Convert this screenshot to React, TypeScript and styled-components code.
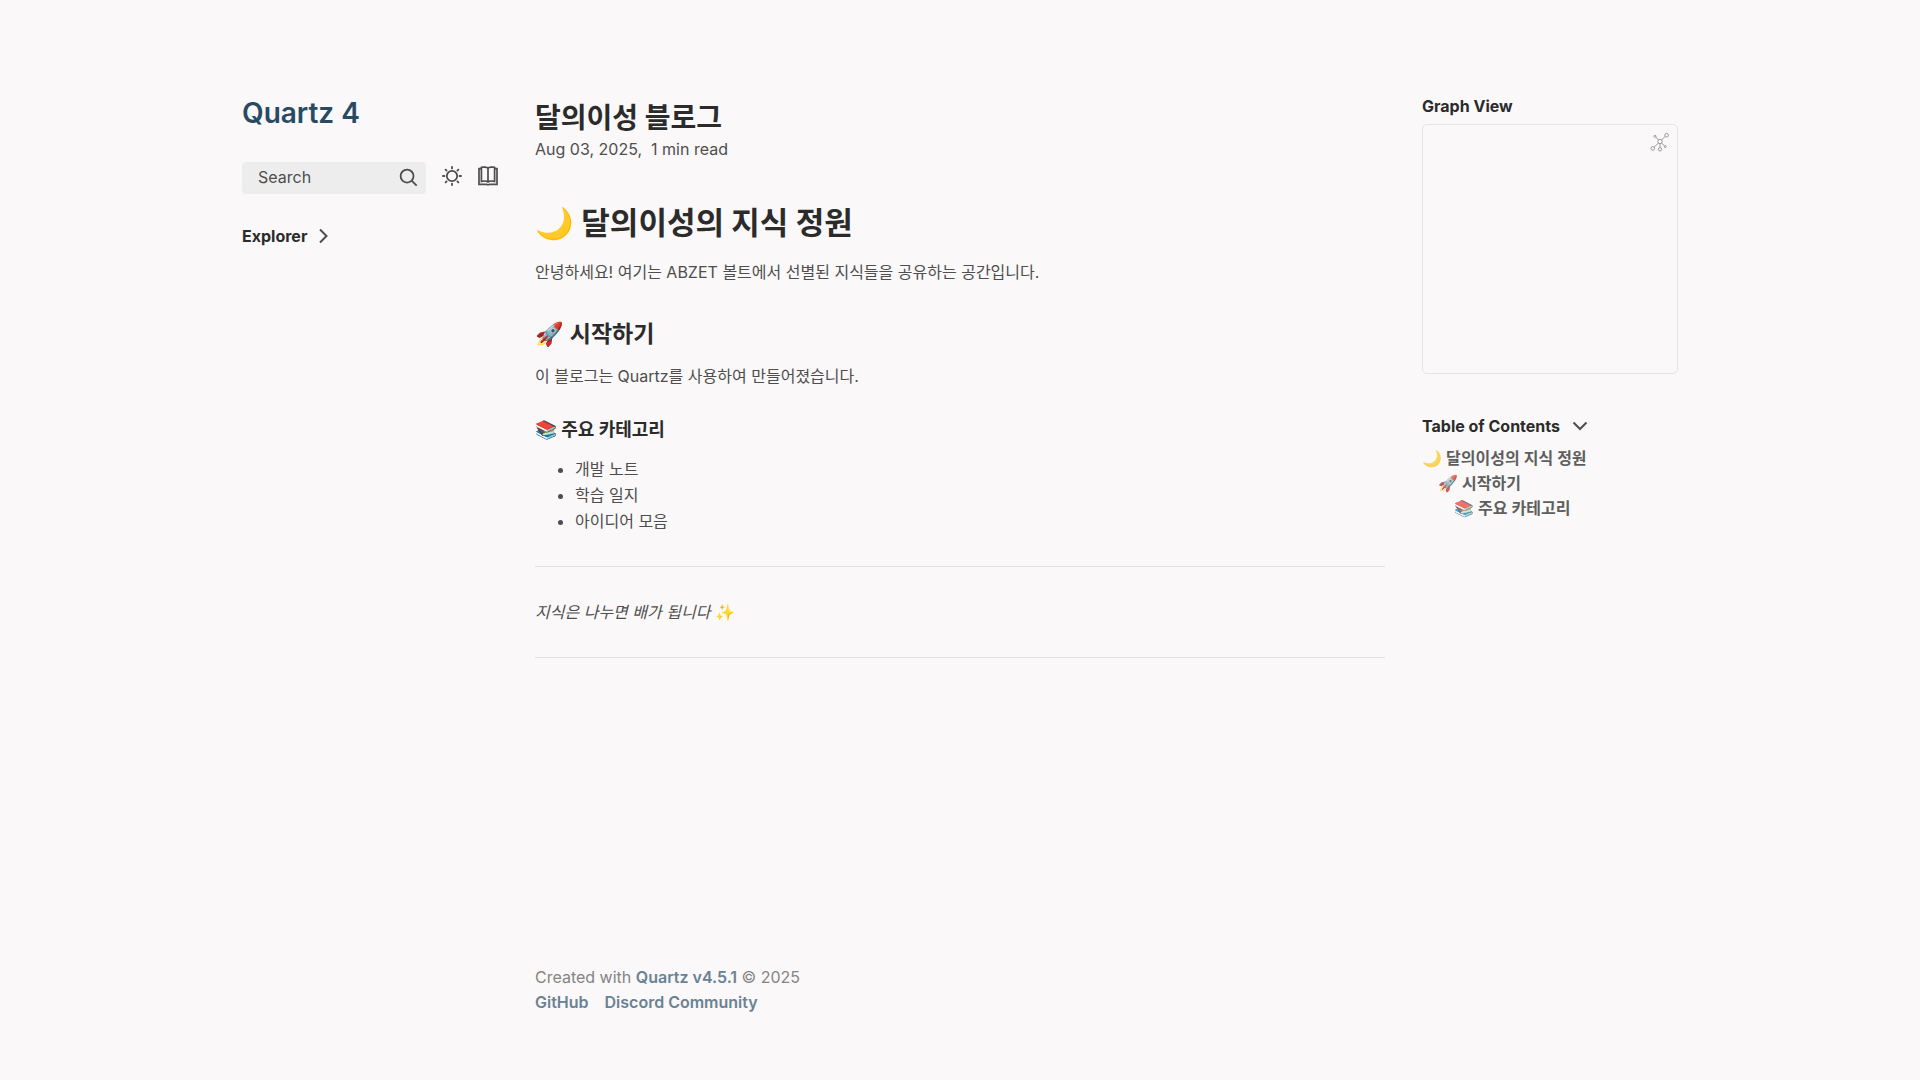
import React, { useState } from "react";
import styled, { createGlobalStyle } from "styled-components";

const GlobalStyle = createGlobalStyle`
  * { box-sizing: border-box; }
  html { text-size-adjust: none; }
  body {
    margin: 0;
    background: #faf8f8;
    color: #4e4e4e;
    font-family: Inter, "Noto Sans CJK KR", sans-serif;
    font-optical-sizing: none;
    font-size: 16px;
    line-height: 26px;
    text-rendering: optimizeLegibility;
    -webkit-font-smoothing: antialiased;
  }
`;

const Page = styled.div`
  max-width: 1500px;
  min-height: 100vh;
  margin: 0 auto;
  display: grid;
  grid-template-columns: 320px minmax(0, 1fr) 320px;
  column-gap: 5px;
`;

const Sidebar = styled.aside<{ $gap: number }>`
  padding: 96px 32px 32px;
  display: flex;
  flex-direction: column;
  gap: ${(p) => p.$gap}px;
`;

const SiteTitle = styled.h2`
  margin: 0;
  font-size: 28px;
  line-height: 34px;
  font-weight: 600;
`;

const SiteLink = styled.a`
  color: #284b63;
  text-decoration: none;
`;

const Tools = styled.div`
  display: flex;
  gap: 16px;
`;

const Search = styled.button`
  flex: 1;
  height: 32px;
  border: 0;
  border-radius: 4px;
  background: #ededed;
  padding: 0 8px 2px 16px;
  display: flex;
  align-items: center;
  justify-content: space-between;
  font: inherit;
  color: #4e4e4e;
  cursor: pointer;
`;

const IconButton = styled.button`
  border: 0;
  background: none;
  width: 20px;
  height: 28px;
  padding: 0;
  display: flex;
  align-items: center;
  color: #4e4e4e;
  cursor: pointer;
`;

const Stroked = styled.svg`
  display: block;
  fill: none;
  stroke: currentColor;
`;

const FoldButton = styled.button`
  border: 0;
  background: none;
  padding: 0;
  display: flex;
  align-items: center;
  gap: 12px;
  font: inherit;
  color: #4e4e4e;
  cursor: pointer;
`;

const PanelTitle = styled.h3`
  margin: 0;
  font-size: 16px;
  line-height: 20px;
  font-weight: 700;
  color: #2b2b2b;
`;

const GraphBox = styled.div`
  height: 250px;
  margin-top: 8px;
  padding: 7px;
  border: 1px solid #e5e5e5;
  border-radius: 5px;
  display: flex;
  justify-content: flex-end;
  align-items: flex-start;
`;

const GraphButton = styled(IconButton)`
  height: 20px;
  opacity: 0.6;
`;

const TocList = styled.ul`
  list-style: none;
  margin: 10px 0 0;
  padding: 0;
  line-height: 25px;
`;

const TocItem = styled.li<{ $depth: number }>`
  padding-left: ${(p) => p.$depth * 16}px;
`;

const TocLink = styled.a`
  color: #2b2b2b;
  opacity: 0.75;
  font-weight: 600;
  text-decoration: none;
`;

const Center = styled.div`
  padding: 96px 0 65px;
  display: flex;
  flex-direction: column;
`;

const ArticleTitle = styled.h1`
  margin: 0;
  font-size: 28px;
  line-height: 44px;
  font-weight: 700;
  color: #2b2b2b;
`;

const Meta = styled.p`
  margin: 0;
  line-height: 18px;
  white-space: pre;
`;

const H1 = styled.h1`
  margin: 43px 0 14px;
  font-size: 31px;
  line-height: 44px;
  color: #2b2b2b;
`;

const H2 = styled.h2`
  margin: 33px 0 13px;
  font-size: 23px;
  line-height: 32px;
  font-weight: 600;
  color: #2b2b2b;
`;

const H3 = styled.h3`
  margin: 28px 0 13px;
  font-size: 18px;
  line-height: 26px;
  color: #2b2b2b;
`;

const Text = styled.p`
  margin: 0;
`;

const List = styled.ul`
  margin: 0;
  padding-left: 40px;
`;

const Rule = styled.hr`
  width: 100%;
  height: 1px;
  margin: 32px 0;
  border: 0;
  background: #e0e0e0;
`;

const Footer = styled.footer`
  margin-top: auto;
  color: #848484;
  line-height: 25px;
`;

const FooterLinks = styled.div`
  display: flex;
  gap: 16px;
`;

const FooterLink = styled.a`
  color: #6a8293;
  font-weight: 600;
  text-decoration: none;
`;

const SearchIcon = () => (
  <Stroked width="19" height="19" viewBox="0 0 20 20" strokeWidth="1.9">
    <circle cx="8.5" cy="8.5" r="6.8" />
    <path d="M13.3 13.3l5.3 5.2" />
  </Stroked>
);

const SunIcon = () => (
  <Stroked width="20" height="20" viewBox="0 0 20 20" strokeWidth="1.8" strokeLinecap="round">
    <circle cx="10" cy="10" r="5.2" />
    <path d="M10 1v1.4M10 17.6V19M1 10h1.4M17.6 10H19M3.6 3.6l.9.9M15.5 15.5l.9.9M3.6 16.4l.9-.9M15.5 4.5l.9-.9" />
  </Stroked>
);

const BookIcon = () => (
  <Stroked width="20" height="20" viewBox="0 0 20 20" strokeWidth="1.7">
    <path d="M10 2.2v13.6M10 2.2C9 1 5 .8 3.4 1.3v14.1c2-.5 5.6-.3 6.6.6 1-.9 4.6-1.1 6.6-.6V1.3C15 .8 11 1 10 2.2z" />
    <path d="M3.4 2.6H1v15.7h7.5c.6.7 2.4.7 3 0H19V2.6h-2.4" />
  </Stroked>
);

const GraphIcon = () => (
  <Stroked width="20" height="20" viewBox="0 0 20 20" strokeWidth="0.9">
    <circle cx="10" cy="9.5" r="2.2" />
    <circle cx="16.6" cy="3.2" r="1.8" />
    <circle cx="2.8" cy="16.4" r="1.8" />
    <circle cx="10" cy="17.3" r="1.7" />
    <circle cx="5" cy="4.3" r="1" />
    <circle cx="15.3" cy="14.6" r="1" />
    <path d="M11.6 7.9l3.7-3.5M8.4 11.1l-4.3 4M10 11.7v3.9M8.4 7.9L5.7 5M11.6 11.1l3 2.8" />
  </Stroked>
);

const ChevronRight = () => (
  <Stroked width="10" height="16" viewBox="0 0 10 16" strokeWidth="2">
    <path d="M1 1.5L7.5 8L1 14.5" />
  </Stroked>
);

const ChevronDown = () => (
  <Stroked width="16" height="10" viewBox="0 0 16 10" strokeWidth="2">
    <path d="M1.5 1.5L8 8l6.5-6.5" />
  </Stroked>
);

const toc = [
  { id: "garden", text: "🌙 달의이성의 지식 정원", depth: 0 },
  { id: "start", text: "🚀 시작하기", depth: 1 },
  { id: "categories", text: "📚 주요 카테고리", depth: 2 },
];

export default function App() {
  const [tocOpen, setTocOpen] = useState(true);
  return (
    <>
      <GlobalStyle />
      <Page>
        <Sidebar $gap={32}>
          <SiteTitle><SiteLink href="#top">Quartz 4</SiteLink></SiteTitle>
          <Tools>
            <Search type="button">Search<SearchIcon /></Search>
            <IconButton type="button" aria-label="Dark mode"><SunIcon /></IconButton>
            <IconButton type="button" aria-label="Reader mode"><BookIcon /></IconButton>
          </Tools>
          <FoldButton type="button" aria-expanded={false}>
            <PanelTitle as="span">Explorer</PanelTitle>
            <ChevronRight />
          </FoldButton>
        </Sidebar>
        <Center id="top">
          <ArticleTitle>달의이성 블로그</ArticleTitle>
          <Meta><time dateTime="2025-08-03">Aug 03, 2025</time>,  1 min read</Meta>
          <article>
            <H1 id="garden">🌙 달의이성의 지식 정원</H1>
            <Text>안녕하세요! 여기는 ABZET 볼트에서 선별된 지식들을 공유하는 공간입니다.</Text>
            <H2 id="start">🚀 시작하기</H2>
            <Text>이 블로그는 Quartz를 사용하여 만들어졌습니다.</Text>
            <H3 id="categories">📚 주요 카테고리</H3>
            <List>
              <li>개발 노트</li>
              <li>학습 일지</li>
              <li>아이디어 모음</li>
            </List>
            <Rule />
            <Text><em>지식은 나누면 배가 됩니다</em> ✨</Text>
          </article>
          <Rule />
          <Footer>
            <Text>Created with <FooterLink href="#quartz">Quartz v4.5.1</FooterLink> © 2025</Text>
            <FooterLinks>
              <FooterLink href="#github">GitHub</FooterLink>
              <FooterLink href="#discord">Discord Community</FooterLink>
            </FooterLinks>
          </Footer>
        </Center>
        <Sidebar $gap={42}>
          <section>
            <PanelTitle>Graph View</PanelTitle>
            <GraphBox>
              <GraphButton type="button" aria-label="Global graph"><GraphIcon /></GraphButton>
            </GraphBox>
          </section>
          <nav>
            <FoldButton type="button" aria-expanded={tocOpen} onClick={() => setTocOpen(!tocOpen)}>
              <PanelTitle as="span">Table of Contents</PanelTitle>
              <ChevronDown />
            </FoldButton>
            {tocOpen && (
              <TocList>
                {toc.map((t) => (
                  <TocItem key={t.id} $depth={t.depth}>
                    <TocLink href={"#" + t.id}>{t.text}</TocLink>
                  </TocItem>
                ))}
              </TocList>
            )}
          </nav>
        </Sidebar>
      </Page>
    </>
  );
}
